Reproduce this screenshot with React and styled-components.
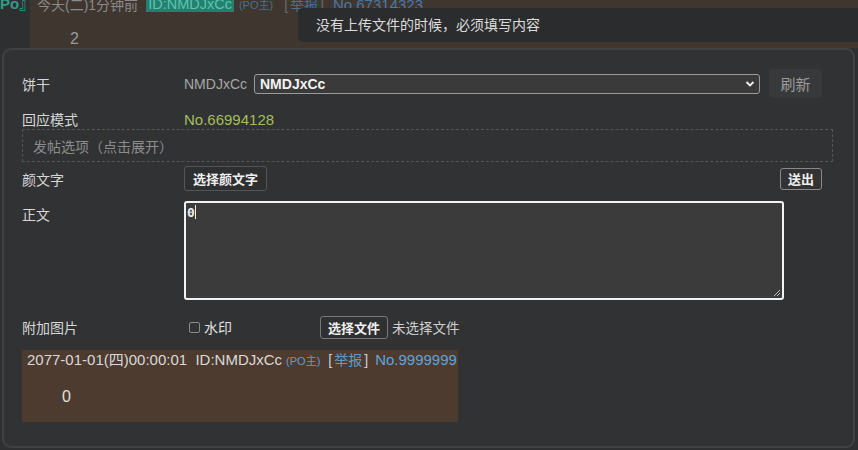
import React from "react";
import styled, { createGlobalStyle } from "styled-components";

const Global = createGlobalStyle`
  html, body { margin: 0; padding: 0; }
  body {
    background: #2d2f30;
    width: 858px;
    height: 450px;
    overflow: hidden;
    font-family: "Liberation Sans", "Noto Sans CJK SC", sans-serif;
    font-size: 14px;
    color: #d4d4d4;
  }
`;

const Page = styled.div`
  position: relative;
  width: 858px;
  height: 450px;
`;

const Thread = styled.div`
  display: flex;
  height: 48px;
  overflow: hidden;
`;

const PoMark = styled.div`
  width: 30px;
  flex: none;
  color: #2f9c8a;
  font-weight: bold;
  font-size: 15px;
  line-height: 16px;
  margin-top: -4px;
`;

const ThreadBody = styled.div`
  flex: 1;
  background: #3f362f;
  padding-left: 7px;
`;

const Meta = styled.div`
  display: flex;
  align-items: center;
  gap: 5px;
  height: 16px;
  margin-top: -4px;
  font-size: 14px;
  color: #8a8a8a;
  white-space: nowrap;
`;

const IdBadge = styled.span`
  background: #23806e;
  color: #5cc4b1;
  padding: 0 2px;
  margin-left: 3px;
  font-size: 14.5px;
`;

const PoTag = styled.span`
  font-size: 11px;
  color: #4b6f8c;
`;

const Report = styled.span`
  color: #6a6a6a;
  margin-left: 6px;
  & b { font-weight: normal; color: #4b6f8c; margin: 0 2px; }
`;

const PostNo = styled.span`
  color: #4b78a8;
  margin-left: 4px;
  font-size: 15px;
`;

const ThreadText = styled.div`
  margin: 18px 0 0 33px;
  font-size: 16px;
  color: #9a9a9a;
`;

const Tooltip = styled.div`
  position: absolute;
  left: 298px;
  top: 8px;
  width: 580px;
  height: 34px;
  box-sizing: border-box;
  padding: 8px 18px;
  background: #2b2c2d;
  border-radius: 5px;
  color: #dcdcdc;
  font-size: 14px;
  line-height: 18px;
`;

const Panel = styled.div`
  margin: 0 3px 0 2px;
  height: 400px;
  box-sizing: border-box;
  border: 2px solid #3f4142;
  border-radius: 9px;
  background: #313233;
  padding: 19px 0 0 18px;
  display: flex;
  flex-direction: column;
`;

const Row = styled.div`
  display: flex;
  align-items: ${(p) => p.$align || "center"};
  height: ${(p) => p.$h}px;
  margin-top: ${(p) => p.$mt || 0}px;
`;

const Label = styled.div`
  width: 162px;
  flex: none;
  color: #d6d6d6;
  font-size: 14px;
  padding-top: ${(p) => p.$pt || 0}px;
`;

const CookieName = styled.span`
  color: #a8a8a8;
  margin-right: 7px;
`;

const Select = styled.div`
  width: 506px;
  height: 20px;
  box-sizing: border-box;
  border: 1px solid #9a9a9a;
  border-radius: 3px;
  background: #3a3a3a;
  display: flex;
  align-items: center;
  justify-content: space-between;
  padding: 0 4px 0 5px;
  font-weight: bold;
  color: #f2f2f2;
`;

const Refresh = styled.button`
  margin-left: 9px;
  width: 53px;
  height: 29px;
  border: none;
  border-radius: 4px;
  background: #38393a;
  color: #9c9c9c;
  font: inherit;
  font-size: 15px;
`;

const Green = styled.span`
  color: #a6bd5e;
  font-size: 15px;
`;

const Dashed = styled.div`
  width: 811px;
  height: 33px;
  box-sizing: border-box;
  border: 1px dashed #555;
  padding-left: 10px;
  display: flex;
  align-items: center;
  color: #8c8c8c;
  font-size: 14px;
`;

const Btn = styled.button`
  height: ${(p) => p.$h || 25}px;
  box-sizing: border-box;
  border: 1px solid ${(p) => p.$border || "#555"};
  border-radius: 3px;
  background: ${(p) => p.$bg || "#2e2f30"};
  color: #f0f0f0;
  font: inherit;
  font-size: 13px;
  font-weight: bold;
  padding: 0 ${(p) => p.$px || 8}px;
  margin-left: ${(p) => p.$ml || 0}px;
  margin-right: ${(p) => p.$mr || 0}px;
`;

const Spacer = styled.div`
  flex: 1;
`;

const TextArea = styled.div`
  width: 600px;
  height: 99px;
  box-sizing: border-box;
  border: 2px solid #f2f2f2;
  border-radius: 3px;
  background: #3b3b3b;
  padding: 2px 1px;
  font-family: "DejaVu Sans Mono", monospace;
  font-size: 13px;
  font-weight: bold;
  color: #eee;
  position: relative;
  & i {
    display: inline-block;
    width: 1px;
    height: 14px;
    background: #eee;
    vertical-align: -2px;
  }
`;

const Grip = styled.svg`
  position: absolute;
  right: 1px;
  bottom: 1px;
`;

const CheckWrap = styled.label`
  display: flex;
  align-items: center;
  margin-left: 5px;
  width: 131px;
  color: #e0e0e0;
  font-size: 14px;
`;

const CheckBox = styled.span`
  width: 11px;
  height: 11px;
  box-sizing: border-box;
  border: 1px solid #8a8a8a;
  border-radius: 2px;
  margin-right: 4px;
`;

const NoFile = styled.span`
  margin-left: 4px;
  color: #cfcfcf;
  font-size: 13.5px;
`;

const Preview = styled.div`
  margin-top: 11px;
  width: 436px;
  height: 72px;
  box-sizing: border-box;
  background: #4d3b30;
  padding: 1px 0 0 5px;
  white-space: nowrap;
  overflow: hidden;
`;

const PreviewMeta = styled.div`
  display: flex;
  align-items: baseline;
  color: #d9d9d9;
  font-size: 15px;
  line-height: 18px;
`;

const Small = styled.span`
  font-size: 11px;
  color: #5d9bcf;
  margin: 0 8px 0 4px;
`;

const Bracket = styled.span`
  color: #cfcfcf;
  margin-right: 7px;
  font-size: 14px;
  & b { font-weight: normal; color: #5d9bcf; margin: 0 2px; }
`;

const Blue = styled.span`
  color: #5fa4dc;
  font-size: 15px;
`;

const PreviewText = styled.div`
  margin: 18px 0 0 35px;
  font-size: 16px;
  color: #e0e0e0;
`;

export default function App() {
  return (
    <Page>
      <Global />
      <Thread>
        <PoMark>Po』</PoMark>
        <ThreadBody>
          <Meta>
            <span>今天(二)1分钟前</span>
            <IdBadge>ID:NMDJxCc</IdBadge>
            <PoTag>(PO主)</PoTag>
            <Report>[<b>举报</b>]</Report>
            <PostNo>No.67314323</PostNo>
          </Meta>
          <ThreadText>2</ThreadText>
        </ThreadBody>
      </Thread>
      <Tooltip>没有上传文件的时候，必须填写内容</Tooltip>
      <Panel>
        <Row $h={29}>
          <Label>饼干</Label>
          <CookieName>NMDJxCc</CookieName>
          <Select>
            <span>NMDJxCc</span>
            <svg width="10" height="8" viewBox="0 0 10 8">
              <path d="M1.5 2 L5 5.5 L8.5 2" fill="none" stroke="#f0f0f0" strokeWidth="1.8" />
            </svg>
          </Select>
          <Refresh>刷新</Refresh>
        </Row>
        <Row $h={20} $mt={11}>
          <Label>回应模式</Label>
          <Green>No.66994128</Green>
        </Row>
        <Dashed>发帖选项（点击展开）</Dashed>
        <Row $h={29} $mt={2}>
          <Label>颜文字</Label>
          <Btn $h={25}>选择颜文字</Btn>
          <Spacer />
          <Btn $h={22} $border="#8a8a8a" $bg="#333" $px={7} $mr={31}>送出</Btn>
        </Row>
        <Row $h={99} $mt={8} $align="flex-start">
          <Label $pt={3}>正文</Label>
          <TextArea>
            0<i />
            <Grip width="8" height="8" viewBox="0 0 8 8">
              <path d="M7 1 L1 7 M7 4 L4 7" stroke="#bbb" strokeWidth="1" />
            </Grip>
          </TextArea>
        </Row>
        <Row $h={24} $mt={15}>
          <Label>附加图片</Label>
          <CheckWrap>
            <CheckBox />
            水印
          </CheckWrap>
          <Btn $h={23} $border="#777" $bg="#2f3031" $px={7}>选择文件</Btn>
          <NoFile>未选择文件</NoFile>
        </Row>
        <Preview>
          <PreviewMeta>
            <span>2077-01-01(四)00:00:01&nbsp;&nbsp;ID:NMDJxCc</span>
            <Small>(PO主)</Small>
            <Bracket>[<b>举报</b>]</Bracket>
            <Blue>No.9999999</Blue>
          </PreviewMeta>
          <PreviewText>0</PreviewText>
        </Preview>
      </Panel>
    </Page>
  );
}
